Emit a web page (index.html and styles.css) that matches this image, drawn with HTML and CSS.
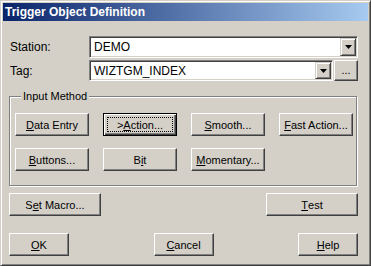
FILE: index.html
```html
<!DOCTYPE html>
<html lang="en">
<head>
    <meta charset="UTF-8">
    <title>Trigger Object Definition</title>
    <link rel="stylesheet" href="styles.css">
</head>
<body>
    <div class="window">
        <div class="titlebar">Trigger Object Definition</div>

        <div class="content">
            <div class="fields">
                <span class="label">Station:</span>
                <div class="combo">
                    <span class="combo-text">DEMO</span>
                    <span class="dropdown">
                        <svg width="7" height="4" viewBox="0 0 7 4"><polygon points="0,0 7,0 3.5,4" fill="#000"/></svg>
                    </span>
                </div>

                <span class="label">Tag:</span>
                <div class="tag-row">
                    <div class="combo">
                        <span class="combo-text">WIZTGM_INDEX</span>
                        <span class="dropdown">
                            <svg width="7" height="4" viewBox="0 0 7 4"><polygon points="0,0 7,0 3.5,4" fill="#000"/></svg>
                        </span>
                    </div>
                    <button class="btn btn-dots">...</button>
                </div>
            </div>

            <div class="group">
                <div class="group-title">Input Method</div>
                <div class="method-grid">
                    <button class="btn"><u>D</u>ata Entry</button>
                    <button class="btn btn-default"><span class="focus">&gt;<u>A</u>ction...</span></button>
                    <button class="btn"><u>S</u>mooth...</button>
                    <button class="btn"><u>F</u>ast Action...</button>
                    <button class="btn"><u>B</u>uttons...</button>
                    <button class="btn">B<u>i</u>t</button>
                    <button class="btn"><u>M</u>omentary...</button>
                </div>
            </div>

            <div class="macro-row">
                <button class="btn btn-wide">S<u>e</u>t Macro...</button>
                <button class="btn btn-wide"><u>T</u>est</button>
            </div>

            <div class="dialog-row">
                <button class="btn btn-small"><u>O</u>K</button>
                <button class="btn btn-small"><u>C</u>ancel</button>
                <button class="btn btn-small"><u>H</u>elp</button>
            </div>
        </div>
    </div>
</body>
</html>
```

FILE: styles.css
```css
body {
    margin: 0;
    background: #d4d0c8;
}
.window {
    width: 371px;
    height: 266px;
    box-sizing: border-box;
    padding: 2px;
    background: #d4d0c8;
    border: 1px solid;
    border-color: #d4d0c8 #404040 #404040 #d4d0c8;
    box-shadow: inset 1px 1px #fff, inset -1px -1px #808080;
    font-family: "Liberation Sans", Arial, sans-serif;
    font-size: 11px;
    color: #000;
}
.titlebar {
    height: 18px;
    line-height: 18px;
    padding-left: 2px;
    background: linear-gradient(to right, #0a246a, #a6caf0);
    color: #fff;
    font-weight: bold;
    font-size: 12px;
}
.content {
    padding: 15px 10px 0 6px;
}
.fields {
    display: grid;
    grid-template-columns: 80px 1fr;
    grid-template-rows: 22px 21px;
    row-gap: 2px;
    align-items: center;
}
.label {
    padding-left: 1px;
    font-size: 12px;
}
.combo {
    display: flex;
    height: 100%;
    box-sizing: border-box;
    padding: 1px;
    background: #fff;
    border: 1px solid;
    border-color: #808080 #fff #fff #808080;
    box-shadow: inset 1px 1px #404040, inset -1px -1px #d4d0c8;
}
.combo-text {
    flex: 1;
    align-self: center;
    padding-left: 3px;
    font-size: 12px;
}
.dropdown {
    width: 16px;
    box-sizing: border-box;
    display: flex;
    align-items: center;
    justify-content: center;
    background: #d4d0c8;
    border: 1px solid;
    border-color: #d4d0c8 #404040 #404040 #d4d0c8;
    box-shadow: inset 1px 1px #fff, inset -1px -1px #808080;
}
.tag-row {
    display: flex;
    gap: 1px;
    height: 100%;
}
.tag-row .combo {
    flex: 1;
}
.btn {
    box-sizing: border-box;
    display: flex;
    align-items: center;
    justify-content: center;
    padding: 0;
    height: 23px;
    background: #d4d0c8;
    border: 1px solid;
    border-color: #fff #404040 #404040 #fff;
    box-shadow: inset -1px -1px #808080;
    font-family: inherit;
    font-size: 11px;
    color: #000;
    white-space: nowrap;
}
.btn-dots {
    width: 24px;
    height: 21px;
    align-items: flex-end;
    padding-bottom: 4px;
}
.btn-default {
    padding: 3px;
    border-color: #000;
    box-shadow: inset 1px 1px #fff, inset -1px -1px #404040, inset -2px -2px #808080;
}
.btn-default .focus {
    flex: 1;
    align-self: stretch;
    display: flex;
    align-items: center;
    justify-content: center;
    border: 1px dotted #000;
}
.group {
    margin: 15px 1px 0 0;
    padding: 0 0 14px 5px;
    border: 1px solid #808080;
    box-shadow: inset 1px 1px #fff, 1px 1px #fff;
}
.group-title {
    width: max-content;
    margin: -7px 0 0 6px;
    padding: 0 2px;
    line-height: 13px;
    background: #d4d0c8;
}
.method-grid {
    margin-top: 10px;
    display: grid;
    grid-template-columns: repeat(4, 74px);
    grid-auto-rows: 23px;
    gap: 12px 14px;
}
.macro-row,
.dialog-row {
    display: flex;
    justify-content: space-between;
}
.macro-row {
    margin-top: 7px;
}
.dialog-row {
    margin-top: 17px;
}
.btn-wide {
    width: 92px;
}
.btn-small {
    width: 60px;
}
```
